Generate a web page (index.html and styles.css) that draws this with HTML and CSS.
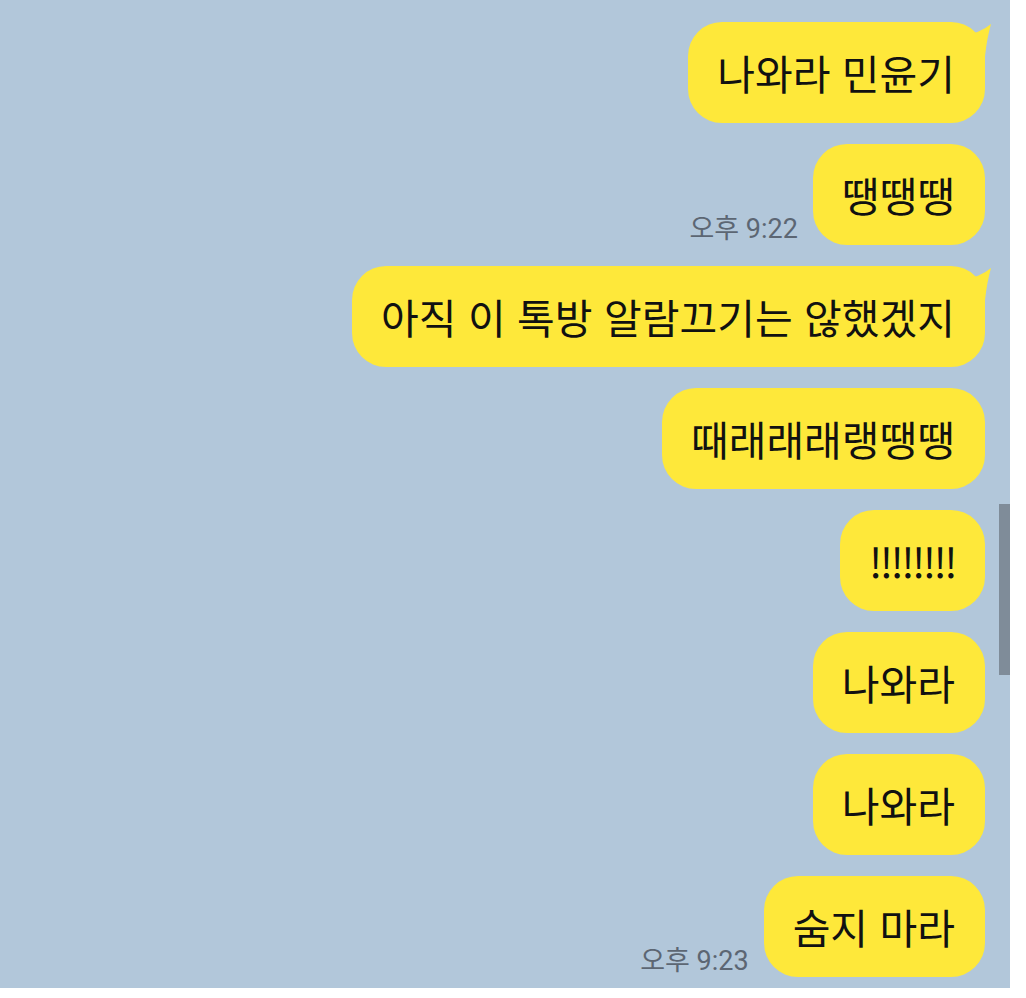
FILE: index.html
```html
<!DOCTYPE html>
<html lang="ko">
<head>
  <meta charset="UTF-8">
  <title>채팅</title>
  <link rel="stylesheet" href="styles.css">
</head>
<body>
  <div class="chat">
    <div class="messages">
      <div class="row">
        <div class="bubble first">나와라 민윤기</div>
      </div>
      <div class="row">
        <span class="time">오후 9:22</span>
        <div class="bubble">땡땡땡</div>
      </div>
      <div class="row">
        <div class="bubble first">아직 이 톡방 알람끄기는 않했겠지</div>
      </div>
      <div class="row">
        <div class="bubble">때래래래랭땡땡</div>
      </div>
      <div class="row">
        <div class="bubble narrow">!!!!!!!!</div>
      </div>
      <div class="row">
        <div class="bubble">나와라</div>
      </div>
      <div class="row">
        <div class="bubble">나와라</div>
      </div>
      <div class="row">
        <span class="time">오후 9:23</span>
        <div class="bubble">숨지 마라</div>
      </div>
    </div>
    <div class="scrollbar"></div>
  </div>
</body>
</html>
```

FILE: styles.css
```css
body {
  margin: 0;
  background-color: #ffffff;
  font-family: "Noto Sans CJK KR", "Noto Sans", sans-serif;
}

.chat {
  position: relative;
  width: 1010px;
  height: 988px;
  background-color: #b2c7da;
  overflow: hidden;
}

.messages {
  display: flex;
  flex-direction: column;
  align-items: flex-end;
  gap: 21px;
  padding: 22px 25px 0 0;
}

.row {
  display: flex;
  align-items: flex-end;
  gap: 15px;
}

.bubble {
  position: relative;
  background-color: #fee83a;
  color: #111111;
  font-size: 41px;
  font-weight: 400;
  line-height: 57px;
  padding: 22px 30px 22px 29px;
  border-radius: 34px;
  white-space: nowrap;
}

.bubble.narrow {
  letter-spacing: -2.5px;
}

/* tail on the first bubble of a group */
.bubble.first::after {
  content: "";
  position: absolute;
  top: 0;
  right: -6px;
  width: 26px;
  height: 34px;
  background-color: #fee83a;
  clip-path: path("M0 12 Q 14 12 26 2 Q 22 16 20 34 L 0 34 Z");
}

.time {
  font-family: Roboto, "Noto Sans CJK KR", sans-serif;
  font-size: 27px;
  color: #5c6673;
  line-height: 32px;
}

.scrollbar {
  position: absolute;
  right: 0;
  top: 504px;
  width: 11px;
  height: 171px;
  background-color: #7f8c99;
}
```
